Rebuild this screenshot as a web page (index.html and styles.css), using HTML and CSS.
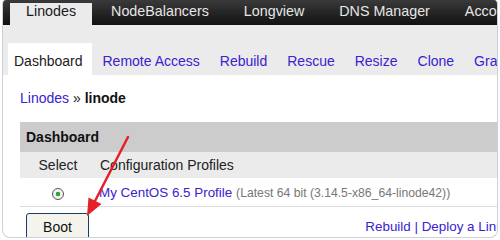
FILE: index.html
```html
<!DOCTYPE html>
<html lang="en">
<head>
    <meta charset="UTF-8">
    <title>Linode Manager</title>
    <link rel="stylesheet" href="styles.css">
</head>
<body>
    <div class="frame">
        <nav class="topnav">
            <a href="#" class="topnav-tab active">Linodes</a>
            <a href="#" class="topnav-tab">NodeBalancers</a>
            <a href="#" class="topnav-tab">Longview</a>
            <a href="#" class="topnav-tab">DNS Manager</a>
            <a href="#" class="topnav-tab">Account</a>
        </nav>
        <div class="subnav">
            <a href="#" class="subnav-tab active">Dashboard</a>
            <a href="#" class="subnav-tab">Remote Access</a>
            <a href="#" class="subnav-tab">Rebuild</a>
            <a href="#" class="subnav-tab">Rescue</a>
            <a href="#" class="subnav-tab">Resize</a>
            <a href="#" class="subnav-tab">Clone</a>
            <a href="#" class="subnav-tab">Graphs</a>
        </div>
        <div class="content">
            <div class="breadcrumb"><a href="#">Linodes</a> &raquo; <b>linode</b></div>
            <div class="panel">
                <table class="panel-table">
                    <tr class="panel-title"><th colspan="2">Dashboard</th></tr>
                    <tr class="panel-head"><th class="col-select">Select</th><th>Configuration Profiles</th></tr>
                    <tr class="panel-row">
                        <td class="col-select"><span class="radio"></span></td>
                        <td><a href="#" class="profile">My CentOS 6.5 Profile</a> <span class="muted">(Latest 64 bit (3.14.5-x86_64-linode42))</span></td>
                    </tr>
                </table>
                <div class="panel-footer">
                    <button class="btn">Boot</button>
                    <span class="panel-links"><a href="#">Rebuild</a> | <a href="#">Deploy a Linux Distribution</a></span>
                </div>
            </div>
        </div>
        <!-- annotation arrow -->
        <svg class="arrow" width="500" height="240" viewBox="0 0 500 240">
            <line x1="127" y1="137" x2="93" y2="203" stroke="#e4202a" stroke-width="2.5" stroke-linecap="round"/>
            <polygon points="86,216 87.5,197.5 100.5,204" fill="#e4202a"/>
        </svg>
    </div>
</body>
</html>
```

FILE: styles.css
```css
body {
    margin: 0;
    background-color: #ffffff;
    font-family: "Liberation Sans", Arial, sans-serif;
    font-size: 14px;
    color: #222222;
}

a {
    color: #3a22cf;
    text-decoration: none;
}

.frame {
    position: relative;
    width: 494px;
    height: 237px;
    margin-left: 2px;
    border: 1px solid #cfd0dc;
    border-top: none;
    border-radius: 4px 4px 8px 8px;
    overflow: hidden;
    background-color: #ffffff;
}

.topnav {
    display: flex;
    gap: 3px;
    height: 25px;
    padding-left: 7px;
    background: linear-gradient(#3a3a3a, #111111);
    white-space: nowrap;
}

.topnav-tab {
    margin-top: 3px;
    padding: 0 16px 5px;
    line-height: 17px;
    font-size: 14.3px;
    color: #e6e6e6;
}

.topnav-tab.active {
    background-color: #ebebeb;
    color: #1a1a1a;
}

.subnav {
    display: flex;
    gap: 2px;
    height: 32px;
    padding: 18px 0 0 5px;
    background-color: #ebebeb;
    white-space: nowrap;
}

.subnav-tab {
    padding: 4px 9px 0;
    line-height: 28px;
}

.subnav-tab.active {
    padding: 4px 9px 0 6px;
    background-color: #ffffff;
    color: #1a1a1a;
}

.content {
    padding: 13px 0 0 17px;
}

.breadcrumb {
    line-height: 20px;
    margin-bottom: 14px;
}

.breadcrumb b {
    color: #111111;
}

.panel {
    width: 567px;
}

.panel-table {
    width: 100%;
    border-collapse: collapse;
}

.panel-table th {
    text-align: left;
    font-weight: normal;
}

.panel-title th {
    height: 30px;
    padding: 0 0 0 6px;
    background-color: #cccccc;
    font-weight: bold;
    color: #111111;
}

.panel-head th {
    height: 26px;
    padding: 0 0 0 4px;
    background-color: #ebebeb;
}

.panel-table .col-select {
    width: 76px;
    padding: 0;
    text-align: center;
}

.panel-row td {
    height: 28px;
    padding: 0 0 0 3px;
    border-bottom: 1px solid #dddddd;
    white-space: nowrap;
}

.profile {
    font-size: 13.4px;
}

.muted {
    font-size: 12.2px;
    color: #777777;
}

.radio {
    display: inline-block;
    width: 10px;
    height: 10px;
    margin-top: 3px;
    border: 1px solid #555555;
    border-radius: 50%;
    background: radial-gradient(circle, #2fa531 0, #2fa531 2px, #f2f2f2 2.6px);
    vertical-align: middle;
}

.panel-footer {
    display: flex;
    align-items: center;
    margin-top: 6px;
    padding: 0 0 0 6px;
}

.btn {
    width: 63px;
    height: 27px;
    padding: 0;
    border: 1px solid #1c3a6a;
    border-radius: 3px;
    background-color: #f4f3ec;
    font-family: "Liberation Sans", Arial, sans-serif;
    font-size: 14px;
    color: #111111;
}

.panel-links {
    margin-left: auto;
    padding-right: 6px;
    font-size: 13.4px;
    color: #3a22cf;
}

.arrow {
    position: absolute;
    left: -2px;
    top: 0;
}
```
